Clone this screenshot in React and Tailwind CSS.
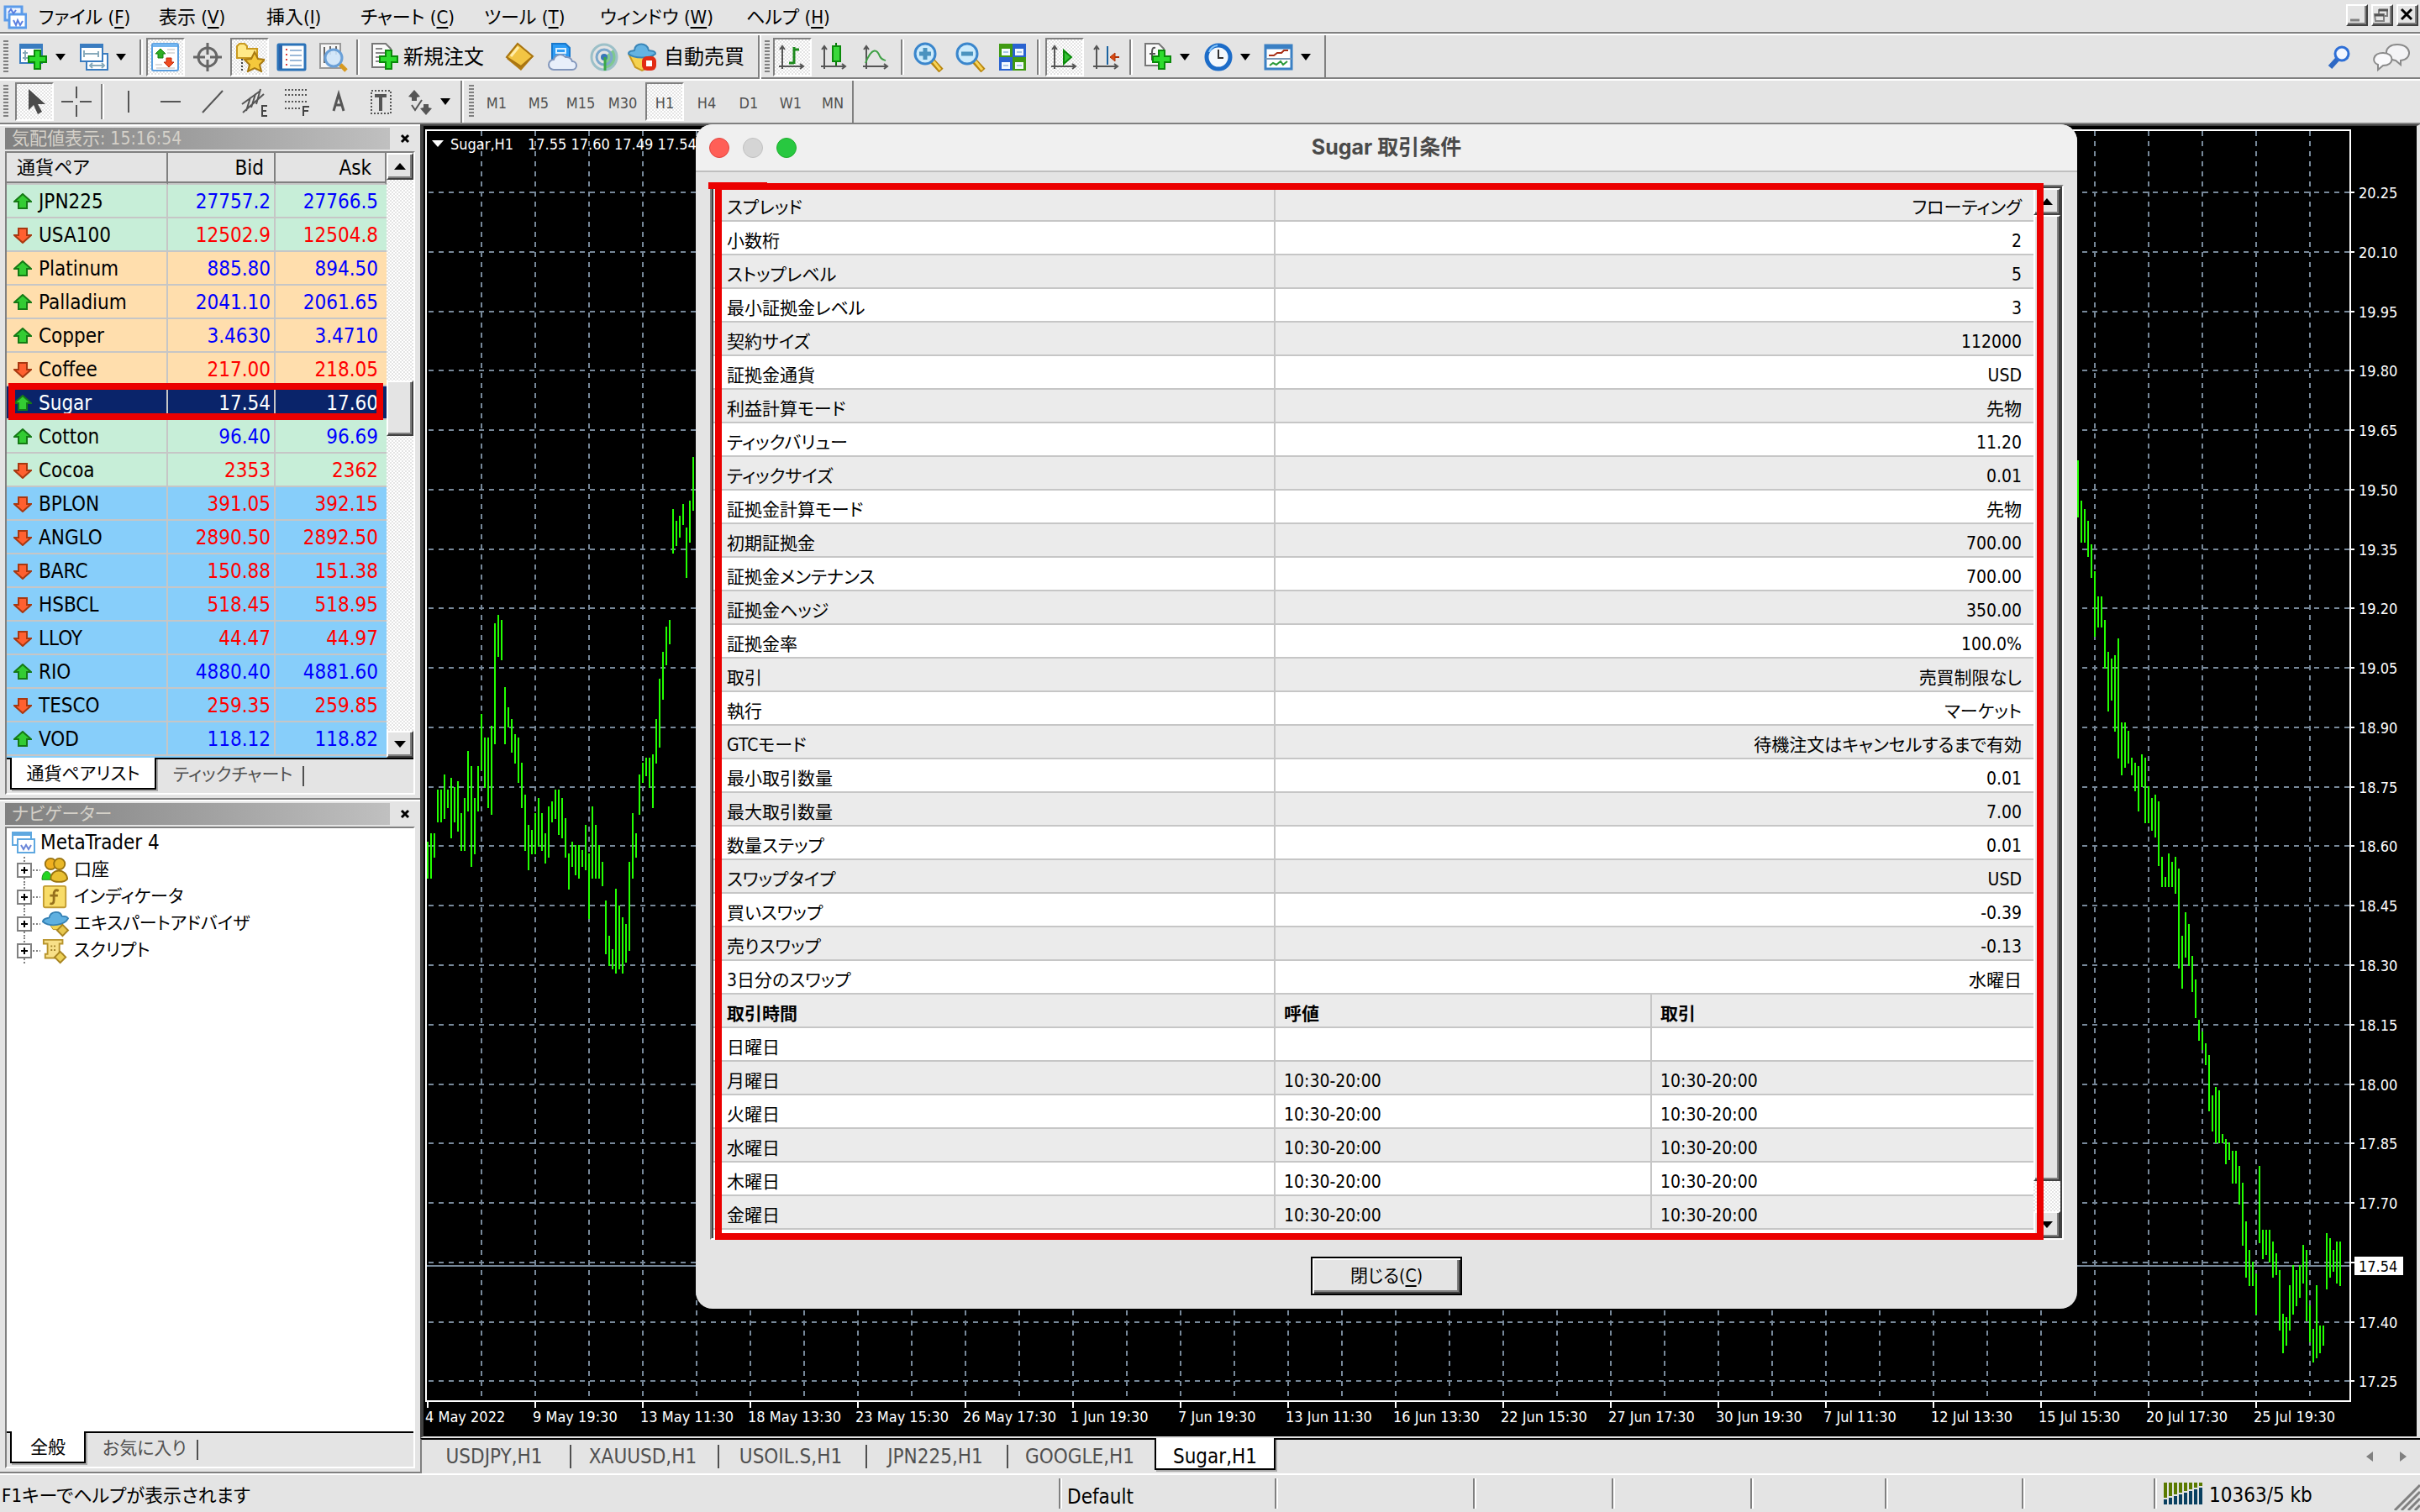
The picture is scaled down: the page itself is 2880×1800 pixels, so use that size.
import { useState } from "react";

const SYMBOLS = [
  ["JPN225", "27757.2", "27766.5", "up", "green"],
  ["USA100", "12502.9", "12504.8", "down", "green"],
  ["Platinum", "885.80", "894.50", "up", "sand"],
  ["Palladium", "2041.10", "2061.65", "up", "sand"],
  ["Copper", "3.4630", "3.4710", "up", "sand"],
  ["Coffee", "217.00", "218.05", "down", "sand"],
  ["Sugar", "17.54", "17.60", "up", "selected"],
  ["Cotton", "96.40", "96.69", "up", "green"],
  ["Cocoa", "2353", "2362", "down", "green"],
  ["BPLON", "391.05", "392.15", "down", "blue"],
  ["ANGLO", "2890.50", "2892.50", "down", "blue"],
  ["BARC", "150.88", "151.38", "down", "blue"],
  ["HSBCL", "518.45", "518.95", "down", "blue"],
  ["LLOY", "44.47", "44.97", "down", "blue"],
  ["RIO", "4880.40", "4881.60", "up", "blue"],
  ["TESCO", "259.35", "259.85", "down", "blue"],
  ["VOD", "118.12", "118.82", "up", "blue"],
];

const ROW_BG = {
  green: "bg-[#c7eed8]",
  sand: "bg-[#ffdead]",
  blue: "bg-[#87cefa]",
  selected: "bg-[#0a246a] text-white",
};

const SPEC = [
  ["スプレッド", "フローティング"],
  ["小数桁", "2"],
  ["ストップレベル", "5"],
  ["最小証拠金レベル", "3"],
  ["契約サイズ", "112000"],
  ["証拠金通貨", "USD"],
  ["利益計算モード", "先物"],
  ["ティックバリュー", "11.20"],
  ["ティックサイズ", "0.01"],
  ["証拠金計算モード", "先物"],
  ["初期証拠金", "700.00"],
  ["証拠金メンテナンス", "700.00"],
  ["証拠金ヘッジ", "350.00"],
  ["証拠金率", "100.0%"],
  ["取引", "売買制限なし"],
  ["執行", "マーケット"],
  ["GTCモード", "待機注文はキャンセルするまで有効"],
  ["最小取引数量", "0.01"],
  ["最大取引数量", "7.00"],
  ["数量ステップ", "0.01"],
  ["スワップタイプ", "USD"],
  ["買いスワップ", "-0.39"],
  ["売りスワップ", "-0.13"],
  ["3日分のスワップ", "水曜日"],
];

const SESSIONS = [
  ["日曜日", ""],
  ["月曜日", "10:30-20:00"],
  ["火曜日", "10:30-20:00"],
  ["水曜日", "10:30-20:00"],
  ["木曜日", "10:30-20:00"],
  ["金曜日", "10:30-20:00"],
];

const PRICES = [
  "20.25", "20.10", "19.95", "19.80", "19.65", "19.50", "19.35", "19.20", "19.05", "18.90", "18.75",
  "18.60", "18.45", "18.30", "18.15", "18.00", "17.85", "17.70", "", "17.40", "17.25",
];

const DATES = [
  "4 May 2022", "9 May 19:30", "13 May 11:30", "18 May 13:30", "23 May 15:30", "26 May 17:30",
  "1 Jun 19:30", "7 Jun 19:30", "13 Jun 11:30", "16 Jun 13:30", "22 Jun 15:30", "27 Jun 17:30",
  "30 Jun 19:30", "7 Jul 11:30", "12 Jul 13:30", "15 Jul 15:30", "20 Jul 17:30", "25 Jul 19:30",
];

// [high, low] pairs, one bar every 4px
const SPRING = [
  [1124, 1222], [1102, 1222], [1102, 1168], [986, 1074], [986, 1074], [945, 1065], [986, 1034], [954, 1115],
  [978, 1074], [963, 1097], [1048, 1150], [1008, 1150], [883, 1043], [923, 1191], [1008, 1159], [923, 1043],
  [784, 935], [847, 980], [847, 1034], [815, 1052], [542, 864], [520, 631], [533, 640], [712, 864],
  [766, 819], [797, 886], [838, 917], [847, 967], [914, 1034], [999, 1150], [1080, 1200], [1093, 1159],
  [1048, 1159], [1008, 1137], [1048, 1150], [1102, 1182], [1030, 1168], [1017, 1074], [986, 1065], [986, 1106],
  [1008, 1115], [1062, 1168], [1156, 1253], [1124, 1191], [1133, 1213], [1133, 1222], [1147, 1191], [1080, 1200],
  [1156, 1331], [1030, 1222], [1080, 1222], [1133, 1222], [1178, 1244], [1281, 1424], [1375, 1455], [1411, 1465],
  [1250, 1477], [1295, 1464], [1326, 1477], [1344, 1446], [1178, 1415], [1048, 1222], [1102, 1168], [945, 1052],
  [914, 967], [900, 949], [900, 980], [892, 1034], [797, 917], [690, 873], [618, 747], [551, 653],
  [533, 599], [237, 357], [269, 335], [255, 313], [224, 281], [287, 420], [215, 326], [99, 241],
];

const SUMMER = [
  [65, 157], [130, 197], [143, 197], [162, 221], [200, 254], [243, 349], [284, 334], [284, 334],
  [322, 400], [373, 469], [384, 451], [378, 502], [351, 545], [487, 572], [487, 560], [500, 553],
  [543, 572], [552, 597], [557, 630], [538, 591], [543, 649], [590, 649], [608, 661], [603, 672],
  [614, 718], [703, 751], [735, 752], [697, 751], [711, 751], [703, 762], [722, 883], [830, 915],
  [792, 865], [811, 878], [862, 921], [900, 962], [965, 999], [984, 1014], [1003, 1038], [1022, 1113],
  [1087, 1145], [1073, 1164], [1079, 1164], [1149, 1164], [1157, 1197], [1163, 1191], [1176, 1229], [1176, 1229],
  [1200, 1262], [1228, 1329], [1290, 1380], [1336, 1394], [1354, 1394], [1373, 1440], [1200, 1324], [1303, 1351],
  [1303, 1343], [1303, 1356], [1322, 1380], [1341, 1376], [1368, 1465], [1438, 1502], [1444, 1490], [1392, 1465],
  [1360, 1440], [1368, 1426], [1360, 1413], [1327, 1389], [1336, 1451], [1425, 1484], [1463, 1517], [1392, 1510],
  [1457, 1502], [1457, 1490], [1308, 1399], [1317, 1380], [1336, 1370], [1322, 1389], [1322, 1394],
];

const RAISED =
  "border-2 border-t-white border-l-white border-r-[#404040] border-b-[#404040] bg-[#e4e4e4] shadow-[inset_-2px_-2px_0_#808080]";
const HATCH = "bg-[repeating-conic-gradient(#fff_0_25%,#e4e4e4_0_50%)] bg-[length:4px_4px]";

export default function App() {
  const [open, setOpen] = useState(true);

  return (
    <div className="relative flex h-screen flex-col overflow-hidden bg-[#e4e4e4] font-['DejaVu_Sans_Condensed','DejaVu_Sans','Noto_Sans_CJK_JP',sans-serif] text-[22px] whitespace-nowrap text-black [font-feature-settings:'palt']">
      <MenuBar />
      <MainToolbar />
      <LineToolbar />
      <div className="flex min-h-0 flex-1">
        <aside className="flex w-[500px] shrink-0 flex-col border-t-2 border-b-2 border-t-white border-b-[#808080]">
          <MarketWatch />
          <Navigator />
        </aside>
        <main className="flex min-w-0 flex-1 flex-col">
          <div className="min-h-0 flex-1 border-t-2 border-r-4 border-b-2 border-l-4 border-t-[#404040] border-r-[#e4e4e4] border-b-[#e4e4e4] border-l-[#404040] bg-black">
            <Chart />
          </div>
          <ChartTabs />
        </main>
      </div>
      <StatusBar />
      {open && <SpecDialog onClose={() => setOpen(false)} />}
    </div>
  );
}

function MenuBar() {
  const items = [
    ["ファイル ", "F", "w-[143px]"],
    ["表示 ", "V", "w-[128px]"],
    ["挿入", "I", "w-[112px]"],
    ["チャート ", "C", "w-[147px]"],
    ["ツール ", "T", "w-[138px]"],
    ["ウィンドウ ", "W", "w-[174px]"],
    ["ヘルプ ", "H", "w-[140px]"],
  ];
  return (
    <header className="flex h-[42px] shrink-0 items-center border-b-2 border-white pl-1 shadow-[inset_0_-2px_0_#808080]">
      <svg className="mr-3.5 h-8 w-7" viewBox="0 0 28 32">
        <rect x="2" y="4" width="20" height="16" fill="#eef5ff" stroke="#5b9bea" strokeWidth="3" />
        <rect x="7" y="13" width="20" height="16" fill="#fff" stroke="#5b9bea" strokeWidth="3" />
        <path d="M6 11l3-4 3 5 3-4M12 20l3 6 2-6 3 6 3-5" fill="none" stroke="#5b7fe0" strokeWidth="2" />
      </svg>
      {items.map(([label, key, w]) => (
        <button key={key} className={`${w} pt-0.5 text-left leading-9`}>
          {label}(<u className="underline-offset-4">{key}</u>)
        </button>
      ))}
      <div className="mr-0.5 mb-1 ml-auto flex gap-1">
        <button aria-label="最小化" className={`${RAISED} size-[26px]`}>
          <svg viewBox="0 0 22 22"><path d="M3 17h11" stroke="#808080" strokeWidth="3" /></svg>
        </button>
        <button aria-label="元に戻す" className={`${RAISED} size-[26px]`}>
          <svg viewBox="0 0 22 22">
            <path d="M7 9V5h10v7h-3M2 10h11v8H3z" fill="none" stroke="#808080" strokeWidth="2" />
            <path d="M7 5h11M2 11h11" stroke="#555" strokeWidth="3" />
          </svg>
        </button>
        <button aria-label="閉じる" className={`${RAISED} size-[26px]`}>
          <svg viewBox="0 0 22 22"><path d="M4 4l12 12M16 4L4 16" stroke="#000" strokeWidth="3" /></svg>
        </button>
      </div>
    </header>
  );
}

function Tool({ label, pressed, children }) {
  return (
    <button
      aria-label={label}
      aria-pressed={pressed}
      className={`flex h-[46px] w-[46px] shrink-0 items-center justify-center border-2 ${
        pressed ? `border-t-[#808080] border-r-white border-b-white border-l-[#808080] ${HATCH}` : "border-transparent"
      }`}
    >
      <svg className="size-9 shrink-0" viewBox="0 0 36 36" fill="none">{children}</svg>
    </button>
  );
}

function DropTool({ label, children }) {
  return (
    <button aria-label={label} className="flex h-[46px] w-[68px] shrink-0 items-center gap-2">
      <svg className="size-9" viewBox="0 0 36 36" fill="none">{children}</svg>
      <svg className="h-2 w-3" viewBox="0 0 12 8"><path d="M0 0h12L6 8z" /></svg>
    </button>
  );
}

function Grip() {
  return <span className="h-10 w-1.5 shrink-0 bg-[repeating-linear-gradient(#808080_0_2px,transparent_2px_4px)]" />;
}

function Sep({ wide }) {
  return (
    <span
      className={`h-[42px] w-1 shrink-0 border-r-2 border-l-2 border-r-white border-l-[#808080] ${wide ? "mx-0.5" : ""}`}
    />
  );
}

function Plus() {
  return <path d="M19 10h7v7h7v7h-7v8h-7v-8h-7v-7h7z" fill="#2ddb2d" stroke="#0a8a0a" strokeWidth="2" />;
}

function Axes() {
  return <path d="M6 32V6m-3 3l3-4 3 4M2 29h29m-4-3l4 3-4 3" stroke="#555" strokeWidth="2" />;
}

function MainToolbar() {
  return (
    <div className="flex h-[54px] shrink-0 items-center border-b-2 border-white shadow-[inset_0_-2px_0_#808080]">
      <div className="flex h-full items-center gap-1 border-r-2 border-[#808080] pr-3 pl-1">
        <Grip />
        <span className="w-1" />
        <DropTool label="新規チャート">
          <rect x="2" y="3" width="26" height="22" fill="#fff" stroke="#3a7cc0" strokeWidth="2" />
          <path d="M2 6h26" stroke="#3a7cc0" strokeWidth="4" />
          <path d="M8 10v12M5 19h9M5 13h6" stroke="#8ab" strokeWidth="2" />
          <Plus />
        </DropTool>
        <DropTool label="チャートの組表示">
          <rect x="9" y="14" width="25" height="19" fill="#fff" stroke="#3a7cc0" strokeWidth="2" />
          <path d="M13 28h17m-14-3l-3 3 3 3m11-6l3 3-3 3" stroke="#8ab" strokeWidth="2" />
          <rect x="2" y="3" width="26" height="20" fill="#fff" stroke="#3a7cc0" strokeWidth="2" />
          <path d="M2 5h26" stroke="#3a7cc0" strokeWidth="4" />
          <path d="M6 10v8m0-4h17m0-3v7" stroke="#8ab" strokeWidth="2" />
        </DropTool>
        <Sep />
        <Tool label="気配値表示" pressed>
          <rect x="2" y="2" width="31" height="32" rx="2" fill="#fff" stroke="#5b9fe0" strokeWidth="2" />
          <path d="M3 4h29" stroke="#74b6f0" strokeWidth="4" />
          <path d="M7 31h22M20 9h9M20 13h9M6 27h8" stroke="#ddd" strokeWidth="2" />
          <path d="M12 8l6 6h-3v5H9v-5H6z" fill="#2fae25" stroke="#14800f" />
          <path d="M22 30l6-6h-3v-5h-6v5h-3z" fill="#f04b20" stroke="#c02a0a" />
        </Tool>
        <Tool label="データウィンドウ">
          <circle cx="18" cy="18" r="11" stroke="#666" strokeWidth="3" />
          <path d="M18 1v14m0 6v14M1 18h14m6 0h14" stroke="#666" strokeWidth="3" />
        </Tool>
        <Tool label="ナビゲーター" pressed>
          <path d="M3 9V5l3-3h6l3 3v3h12v11H3z" fill="#ffe988" stroke="#c99a20" strokeWidth="2" />
          <path d="M9 20v14" stroke="#444" strokeWidth="2" strokeDasharray="2 2" />
          <path d="M24 12l4 8 8 1-6 6 2 8-8-4-8 4 2-8-6-6 8-1z" fill="#f5c93c" stroke="#a87910" strokeWidth="2" />
        </Tool>
        <Tool label="ターミナル">
          <rect x="2" y="3" width="32" height="30" rx="1" fill="#fff" stroke="#2a72b8" strokeWidth="3" />
          <path d="M5 4v28" stroke="#2a62a8" strokeWidth="4" />
          <path d="M16 10h14M16 16h14M16 22h14M16 28h14" stroke="#9ab8d8" strokeWidth="2" />
          <path d="M12 8v22" stroke="#e04040" strokeWidth="2" strokeDasharray="2 4" />
        </Tool>
        <Tool label="ストラテジーテスター">
          <rect x="2" y="2" width="24" height="29" fill="#f6f6f6" stroke="#999" strokeWidth="2" />
          <path d="M7 6v19M14 5v10M21 5v10" stroke="#666" strokeWidth="2" />
          <circle cx="18" cy="19" r="10" fill="#cfe6fa" fillOpacity=".9" stroke="#6aa0d8" strokeWidth="3" />
          <path d="M26 27l7 7" stroke="#d89a20" strokeWidth="5" />
        </Tool>
        <Sep />
        <button className="ml-2 flex h-[46px] w-[152px] shrink-0 items-center gap-1 text-[24px]">
          <svg className="size-9 shrink-0" viewBox="0 0 36 36" fill="none">
            <path d="M3 2h16l6 6v22H3z" fill="#fafafa" stroke="#777" strokeWidth="2" />
            <path d="M7 8h8M7 13h13M7 18h10M7 23h8" stroke="#888" strokeWidth="2" />
            <Plus />
          </svg>
          新規注文
        </button>
        <Tool label="メタエディター">
          <path d="M2 20L15 3l18 15-14 16z" fill="#b07a12" />
          <path d="M2 18L15 2l18 15-14 12z" fill="#f2c544" stroke="#a87410" strokeWidth="2" />
          <path d="M7 17l9-11" stroke="#ffedaa" strokeWidth="3" />
        </Tool>
        <Tool label="仮想サーバー">
          <path d="M6 2h16l5 5v15H6z" fill="#2d9cf5" stroke="#1878cc" strokeWidth="2" />
          <path d="M11 8h11v5H11zM11 16h11" stroke="#d8efff" strokeWidth="2" />
          <path d="M8 33a6 6 0 010-12 8 8 0 0114-3 7 7 0 018 5 5 5 0 010 10z" fill="#e8effa" stroke="#8296bb" strokeWidth="2" />
        </Tool>
        <Tool label="シグナル">
          <path d="M18 18v16a16 16 0 0012-26z" fill="#80c890" />
          <circle cx="18" cy="18" r="15" stroke="#9cc0c8" strokeWidth="3" />
          <circle cx="18" cy="18" r="9" stroke="#7ba8cc" strokeWidth="3" />
          <circle cx="18" cy="18" r="4" fill="#3977b8" />
          <path d="M19 18v16" stroke="#3aa848" strokeWidth="3" />
        </Tool>
        <button className="flex h-[46px] w-[144px] shrink-0 items-center gap-2 text-[24px]">
          <svg className="size-9 shrink-0" viewBox="0 0 36 36" fill="none">
            <path d="M3 16h28l-4 14-9 4-8-4z" fill="#f5d250" stroke="#c89820" strokeWidth="2" />
            <path d="M2 14c0-4 5-3 7-4 0-10 16-10 17 0 3 1 8 0 8 4-6 6-26 6-32 0z" fill="#64b3e2" stroke="#3a86b8" strokeWidth="2" />
            <rect x="18" y="17" width="17" height="17" rx="6" fill="#e22c14" />
            <rect x="23" y="22" width="7" height="7" fill="#fff" />
          </svg>
          自動売買
        </button>
      </div>
      <div className="flex h-full items-center gap-1 border-r-2 border-l-2 border-r-[#808080] border-l-white pr-1 pl-1">
        <Grip />
        <Tool label="バーチャート" pressed>
          <Axes />
          <path d="M20 6v20M14 25h6M20 9h6" stroke="#1d8a1d" strokeWidth="3" />
        </Tool>
        <Tool label="ローソク足">
          <Axes />
          <path d="M20 1v27" stroke="#0a7a0a" strokeWidth="2" />
          <rect x="16" y="5" width="9" height="18" fill="#3ad83a" stroke="#0a8a0a" strokeWidth="2" />
        </Tool>
        <Tool label="ラインチャート">
          <Axes />
          <path d="M5 25c8-20 14-16 17-8 2 4 4 4 7 5" stroke="#3fa045" strokeWidth="2" />
        </Tool>
        <Sep wide />
        <Tool label="ズームイン">
          <path d="M22 22l11 12" stroke="#b8850c" strokeWidth="7" />
          <path d="M23 22l9 11" stroke="#f8d458" strokeWidth="3" />
          <circle cx="14" cy="14" r="12" fill="#ccebfc" stroke="#3a86cc" strokeWidth="3" />
          <path d="M14 7v14M7 14h14" stroke="#4b93bf" strokeWidth="5" />
        </Tool>
        <Tool label="ズームアウト">
          <path d="M22 22l11 12" stroke="#b8850c" strokeWidth="7" />
          <path d="M23 22l9 11" stroke="#f8d458" strokeWidth="3" />
          <circle cx="14" cy="14" r="12" fill="#ccebfc" stroke="#3a86cc" strokeWidth="3" />
          <path d="M7 14h14" stroke="#4b93bf" strokeWidth="5" />
        </Tool>
        <Tool label="ウィンドウの整列">
          <path d="M2 2h16v16H2zM18 18h16v16H18z" fill="#3f9a12" />
          <path d="M18 2h16v16H18zM2 18h16v16H2z" fill="#2a63d0" />
          <path d="M5 8h10v8H5zM21 8h10v8H21zM5 24h10v8H5zM21 24h10v8H21z" fill="#f4faff" />
          <path d="M7 12h6M23 12h6M7 28h6M23 28h6" stroke="#a8c4e8" strokeWidth="2" />
        </Tool>
        <Sep wide />
        <Tool label="自動スクロール" pressed>
          <Axes />
          <path d="M17 10v16l9-8z" fill="#35c235" stroke="#0a8a0a" strokeWidth="2" />
        </Tool>
        <Tool label="チャートシフト">
          <Axes />
          <path d="M19 5v22" stroke="#1a62a0" strokeWidth="2" />
          <path d="M22 18h11" stroke="#b03208" strokeWidth="2" />
          <path d="M28 13l-6 5 6 5z" fill="#d84a10" stroke="#b03208" />
        </Tool>
        <Sep />
        <span className="w-1" />
        <DropTool label="インディケータ">
          <path d="M3 2h16l6 6v20H3z" fill="#fafafa" stroke="#777" strokeWidth="2" />
          <path d="M15 7c-4-1-4 3-4 6v9M8 14h7" stroke="#555" strokeWidth="2" />
          <Plus />
        </DropTool>
        <DropTool label="時間足">
          <circle cx="18" cy="18" r="14" fill="#f4f8fc" stroke="#1c6cc8" strokeWidth="5" />
          <path d="M18 9v10h6" stroke="#333" strokeWidth="2" />
          <path d="M7 12a12 12 0 0110-8" stroke="#86c6f8" strokeWidth="2" />
        </DropTool>
        <DropTool label="定型チャート">
          <rect x="2" y="4" width="31" height="28" fill="#fff" stroke="#3a80c4" strokeWidth="3" />
          <path d="M2 6h31" stroke="#3a80c4" strokeWidth="5" />
          <path d="M2 20h31" stroke="#7a9ab8" strokeWidth="2" />
          <path d="M6 16h6l4-3h5l3-3h5" stroke="#a83018" strokeWidth="2" />
          <path d="M7 28l4-3 4 2 5-4 3 4 5-4" stroke="#2a9a38" strokeWidth="2" />
        </DropTool>
      </div>
      <div className="mr-3 ml-auto flex items-center gap-6">
        <button aria-label="検索">
          <svg className="size-8" viewBox="0 0 32 32" fill="none">
            <path d="M15 17L5 28" stroke="#2e68c4" strokeWidth="6" />
            <circle cx="19" cy="12" r="8" fill="#f2f6ff" stroke="#2e6fd6" strokeWidth="3" />
          </svg>
        </button>
        <button aria-label="チャット">
          <svg className="h-9 w-11" viewBox="0 0 44 36" fill="none" stroke="#8a8a8a" strokeWidth="2">
            <path d="M29 3c18 0 18 18 4 19v5l-6-5C12 20 12 3 29 3z" fill="#f4f4f6" />
            <path d="M12 13c14 0 14 15 0 15l-6 5v-6C-2 24 0 13 12 13z" fill="#fafafc" />
          </svg>
        </button>
      </div>
    </div>
  );
}

function LineToolbar() {
  const [frame, setFrame] = useState("H1");
  return (
    <div className="flex h-[52px] shrink-0 items-center border-b-2 border-[#808080]">
      <div className="flex h-full items-center gap-1 border-r-2 border-[#808080] pl-1">
        <Grip />
        <span />
        <Tool label="カーソル" pressed>
          <path d="M11 3v25l6-6 5 11 5-3-5-9h9z" fill="#4a4a4a" />
        </Tool>
        <Tool label="十字カーソル">
          <path d="M18 0v14m0 8v14M0 18h14m8 0h14" stroke="#555" strokeWidth="2" />
        </Tool>
        <Sep wide />
        <Tool label="垂直線"><path d="M18 5v26" stroke="#555" strokeWidth="2" /></Tool>
        <Tool label="水平線"><path d="M6 18h24" stroke="#555" strokeWidth="2" /></Tool>
        <Tool label="トレンドライン"><path d="M6 31L30 5" stroke="#555" strokeWidth="2" /></Tool>
        <Tool label="チャネル">
          <path d="M3 21L25 5M4 31L29 9M8 29l5-16M14 25l5-16M20 21l5-18" stroke="#555" strokeWidth="2" />
          <path d="M33 23h-6v12h6m-6-6h5" stroke="#444" strokeWidth="2" />
        </Tool>
        <Tool label="フィボナッチ">
          <path d="M4 4h28M4 10h28M4 18h28M4 26h18" stroke="#555" strokeWidth="2" strokeDasharray="2 2" />
          <path d="M33 24h-7v11m0-6h6" stroke="#444" strokeWidth="2" />
        </Tool>
        <Tool label="テキスト">
          <path d="M12 29l6-20 6 20m-10-7h8" stroke="#555" strokeWidth="3" />
        </Tool>
        <Tool label="テキストラベル">
          <rect x="7" y="5" width="23" height="27" stroke="#555" strokeWidth="2" strokeDasharray="2 2" />
          <path d="M11 11h14M18 11v18" stroke="#555" strokeWidth="4" />
        </Tool>
        <DropTool label="矢印">
          <path d="M13 4l7 8-4 1v4h-6v-4l-4-1zM27 34l-7-8 4-1v-4h6v4l4 1z" fill="#555" />
          <path d="M10 22l4 6 8-12" stroke="#555" strokeWidth="2" />
        </DropTool>
      </div>
      <div className="flex h-full items-center gap-1 border-r-2 border-l-2 border-r-[#808080] border-l-white pl-1.5">
        <Grip />
        {["M1", "M5", "M15", "M30", "H1", "H4", "D1", "W1", "MN"].map((f) => (
          <button
            key={f}
            onClick={() => setFrame(f)}
            className={`h-[46px] w-[46px] border-2 pt-0.5 text-[18px] text-[#505050] ${
              f === frame ? `border-t-[#808080] border-r-white border-b-white border-l-[#808080] ${HATCH}` : "border-transparent"
            }`}
          >
            {f}
          </button>
        ))}
      </div>
    </div>
  );
}

function PanelTitle({ children }) {
  return (
    <div className="mb-0.5 flex h-[26px] shrink-0 items-center">
      <h2 className="h-full w-[458px] bg-linear-to-r from-[#808080] to-[#c0c0c0] pl-2 text-[21px] leading-[26px] text-[#d4d0c8]">
        {children}
      </h2>
      <button aria-label="閉じる" className="ml-3">
        <svg className="h-3 w-3" viewBox="0 0 12 12"><path d="M2 2l8 8M10 2l-8 8" stroke="#000" strokeWidth="3" /></svg>
      </button>
    </div>
  );
}

function Arrow({ dir }) {
  return dir === "up" ? (
    <svg className="h-5 w-[22px]" viewBox="0 0 22 20"><path d="M11 1l10 9h-5v8H6v-8H1z" fill="#33cc33" stroke="#157a15" strokeWidth="2" /></svg>
  ) : (
    <svg className="h-5 w-[22px]" viewBox="0 0 22 20"><path d="M11 19L1 10h5V2h10v8h5z" fill="#ff6030" stroke="#a83810" strokeWidth="2" /></svg>
  );
}

function ScrollButton({ up }) {
  return (
    <button aria-label={up ? "上へ" : "下へ"} className={`${RAISED} flex h-8 w-8 shrink-0 items-center justify-center`}>
      <svg className="h-2 w-3.5" viewBox="0 0 14 8"><path d={up ? "M0 8h14L7 0z" : "M0 0h14L7 8z"} /></svg>
    </button>
  );
}

function BottomTabs({ active, activeClass, other }) {
  return (
    <div className="flex h-[42px] shrink-0 border-t-2 border-black text-[21px]">
      <button className={`${activeClass} -mt-0.5 h-[38px] border-2 border-t-0 border-black bg-white pt-1 shadow-[2px_2px_0_#aaa]`}>
        {active}
      </button>
      <button className="ml-5 h-9 pt-0.5 pr-3 text-[#505050]">{other}</button>
      <span className="mt-2 h-6 w-0.5 bg-[#505050]" />
    </div>
  );
}

function MarketWatch() {
  return (
    <section className="flex flex-col border-b-2 border-[#808080] pt-0.5 pr-1.5 pb-1 pl-1.5">
      <PanelTitle>気配値表示: 15:16:54</PanelTitle>
      <div className="border-2 border-t-[#808080] border-r-white border-b-white border-l-[#808080]">
        <div className="flex bg-[#87cefa]">
          <div className="min-w-0 flex-1 pb-0.5">
            <table className="w-full table-fixed border-separate border-spacing-0 text-[24px]">
              <colgroup>
                <col className="w-[192px]" />
                <col className="w-[128px]" />
                <col />
              </colgroup>
              <thead>
                <tr className="h-[38px] bg-[#e4e4e4] leading-8 [&>th]:border-r-2 [&>th]:border-b-2 [&>th]:border-r-[#808080] [&>th]:border-b-[#c6c6c6] [&>th]:font-normal [&>th]:shadow-[inset_0_-2px_0_#808080]">
                  <th className="pl-3 text-left text-[22px]">通貨ペア</th>
                  <th className="pr-3 text-right">Bid</th>
                  <th className="pr-4 text-right">Ask</th>
                </tr>
              </thead>
              <tbody>
                {SYMBOLS.map(([name, bid, ask, dir, tone]) => {
                  const color = tone === "selected" ? "text-white" : dir === "up" ? "text-[#0000ff]" : "text-[#ff0000]";
                  return (
                    <tr
                      key={name}
                      className={`relative h-10 leading-9 ${ROW_BG[tone]} [&>td]:border-b-2 [&>td]:border-[#c6c6c6] [&>td]:pt-0.5`}
                    >
                      <td className="border-r-2 pl-2">
                        <span className="flex items-center gap-2"><Arrow dir={dir} />{name}</span>
                        {tone === "selected" && (
                          <span className="absolute -top-1 right-1 bottom-0 left-0.5 border-8 border-[#eb0000]" />
                        )}
                      </td>
                      <td className={`border-r-2 pr-1 text-right ${color}`}>{bid}</td>
                      <td className={`pr-2.5 text-right ${color}`}>{ask}</td>
                    </tr>
                  );
                })}
              </tbody>
            </table>
          </div>
          <div className={`flex w-8 flex-col ${HATCH}`}>
            <ScrollButton up />
            <span className="grow-[240]" />
            <span className={`${RAISED} h-[66px]`} />
            <span className="grow-[352]" />
            <ScrollButton />
          </div>
        </div>
        <BottomTabs active="通貨ペアリスト" activeClass="ml-1 w-[174px]" other="ティックチャート" />
      </div>
    </section>
  );
}

function Navigator() {
  const nodes = [
    ["口座", <><circle cx="12" cy="9" r="7" fill="#f0b020" stroke="#9a7410" strokeWidth="2" /><circle cx="23" cy="9" r="7" fill="#e8b828" stroke="#9a7410" strokeWidth="2" /><path d="M1 29c0-14 12-14 12 0z" fill="#22d522" stroke="#128a12" /><path d="M12 28c0-14 20-14 21 0-4 5-17 5-21 0z" fill="#eac030" stroke="#9a7410" strokeWidth="2" /></>],
    ["インディケータ", <><rect x="3" y="3" width="28" height="27" rx="2" fill="#f8dc68" stroke="#c09a30" strokeWidth="2" /><path d="M22 9c-4-2-6 0-6 5v7c0 4-2 5-5 4M11 15h10" stroke="#96701c" strokeWidth="3" /></>],
    ["エキスパートアドバイザ", <><path d="M9 15h18l-4 9h-8z" fill="#f4d450" stroke="#b89020" /><path d="M2 14c1-5 6-4 8-5 2-9 14-9 16-2 3 0 7 0 8 3-4 8-22 12-32 4z" fill="#5fb0e0" stroke="#3480b4" strokeWidth="2" /><path d="M27 18l7 7-7 7-7-7z" fill="#e8c850" stroke="#a88420" strokeWidth="2" /></>],
    ["スクリプト", <><path d="M3 3h24v5h-4v13h4v5H5v-5h3V8H3z" fill="#f8e088" stroke="#b8942c" strokeWidth="2" /><path d="M12 11h7M12 16h7" stroke="#a08028" strokeWidth="2" strokeDasharray="2 2" /><path d="M24 18l7 7-7 7-7-7z" fill="#ecd058" stroke="#a88420" strokeWidth="2" /></>],
  ];
  return (
    <section className="flex min-h-0 flex-1 flex-col border-t-2 border-white px-1.5 pt-0.5 pb-1">
      <PanelTitle>ナビゲーター</PanelTitle>
      <div className="flex min-h-0 flex-1 flex-col border-2 border-t-[#808080] border-r-white border-b-white border-l-[#808080]">
        <div className="flex-1 bg-white pl-1.5">
          <div className="flex h-[34px] items-center gap-1.5 text-[24px]">
            <svg className="h-7 w-7" viewBox="0 0 28 28" fill="none">
              <rect x="1" y="2" width="22" height="15" fill="#fff" stroke="#5fa8e0" strokeWidth="2" />
              <path d="M1 4h22" stroke="#5fa8e0" strokeWidth="4" />
              <rect x="7" y="10" width="20" height="16" fill="#fff" stroke="#5fa8e0" strokeWidth="2" />
              <path d="M11 17l3 5 3-5 3 5 3-5" stroke="#6a86d8" strokeWidth="2" />
            </svg>
            MetaTrader 4
          </div>
          <ul className="text-[21px]">
            {nodes.map(([label, icon]) => (
              <li key={label} className="flex h-8 items-center">
                <svg className="h-8 w-[34px]" viewBox="0 0 34 32" fill="none">
                  <path d="M15 0v7M15 25v7M25 16h9" stroke="#808080" strokeWidth="2" strokeDasharray="2 2" />
                  <rect x="7" y="8" width="16" height="16" fill="#fff" stroke="#808080" strokeWidth="2" />
                  <path d="M11 16h8M15 12v8" stroke="#000" strokeWidth="2" />
                </svg>
                <svg className="mr-1 h-8 w-9" viewBox="0 0 36 34" fill="none">{icon}</svg>
                {label}
              </li>
            ))}
          </ul>
        </div>
        <BottomTabs active="全般" activeClass="ml-1 w-[90px]" other="お気に入り" />
      </div>
    </section>
  );
}

function Bars({ data, x, scale }) {
  return data.map(([hi, lo], i) => (
    <rect key={i} x={x + i * 4} y={500 + hi / scale} width="2" height={(lo - hi) / scale} />
  ));
}

function Chart() {
  const rows = PRICES.map((p, i) => [p, Math.round(229 + i * 70.77)]);
  const cols = Array.from({ length: 35 }, (_, i) => 573 + i * 64);
  return (
    <svg className="block h-full w-full text-[18px]" viewBox="504 150 2372 1560" preserveAspectRatio="xMinYMin meet">
      <g stroke="#778899" strokeWidth="2" strokeDasharray="6 6">
        {rows.map(([, y]) => <path key={y} d={`M510 ${y}H2796`} />)}
        {cols.map((x) => <path key={x} d={`M${x} 156V1668`} />)}
      </g>
      <path d="M508 1507H2796" stroke="#778899" strokeWidth="2" />
      <g fill="#22ff00" shapeRendering="crispEdges">
        <Bars data={SPRING} x={508} scale={2.24} />
        <Bars data={SUMMER} x={2472} scale={1.3517} />
      </g>
      <path d="M507 1668V155H2797V1668H506" fill="none" stroke="#fff" strokeWidth="2" />
      <g fill="#fff">
        {rows.map(([p, y]) => (
          <g key={y}>
            <rect x="2798" y={y - 1} width="4" height="2" />
            <text x="2807" y={y + 7}>{p}</text>
          </g>
        ))}
        {DATES.map((d, i) => (
          <g key={d}>
            <rect x={508 + i * 128} y="1669" width="2" height="7" />
            <text x={506 + i * 128} y="1693">{d}</text>
          </g>
        ))}
        <path d="M514 167h14l-7 8z" />
        <text x="536" y="178">Sugar,H1</text>
        <text x="628" y="178">17.55 17.60 17.49 17.54</text>
        <rect x="2802" y="1496" width="58" height="22" />
      </g>
      <text x="2807" y="1514">17.54</text>
    </svg>
  );
}

function ChartTabs() {
  const tabs = [
    ["USDJPY,H1", "w-[178px]"],
    ["XAUUSD,H1", "w-[176px]"],
    ["USOIL.S,H1", "w-[176px]"],
    ["JPN225,H1", "w-[168px]"],
    ["GOOGLE,H1", "w-[174px]"],
  ];
  return (
    <nav className="flex h-[42px] shrink-0 border-t-2 border-l-2 border-t-black border-l-[#808080] text-[24px]">
      {tabs.map(([name, w], i) => (
        <span key={name} className={`${w} flex items-center justify-center`}>
          <button className="flex-1 pr-1 text-[#505050]">{name}</button>
          {i < 4 && <span className="h-7 w-0.5 bg-[#505050]" />}
        </span>
      ))}
      <button className="-mt-0.5 h-[38px] w-[144px] border-2 border-t-0 border-black bg-white pt-1 shadow-[2px_2px_0_#aaa]">Sugar,H1</button>
      <div className="mr-4 ml-auto flex items-center gap-8">
        <button aria-label="前へ"><svg className="h-3 w-2" viewBox="0 0 8 12"><path d="M8 0v12L0 6z" fill="#808080" /></svg></button>
        <button aria-label="次へ"><svg className="h-3 w-2" viewBox="0 0 8 12"><path d="M0 0v12l8-6z" fill="#808080" /></svg></button>
      </div>
    </nav>
  );
}

function StatusBar() {
  const cell = "h-9 shrink-0 border-l-2 border-[#808080] shadow-[inset_2px_0_0_#fff]";
  return (
    <footer className="flex h-[46px] shrink-0 items-center border-t-2 border-white">
      <p className="min-w-0 flex-1 pt-1 pl-0.5">F1キーでヘルプが表示されます</p>
      <span className={`${cell} w-[257px] pt-1.5 pl-2 text-[24px] leading-8`}>Default</span>
      <span className={`${cell} w-[236px]`} />
      <span className={`${cell} w-[165px]`} />
      <span className={`${cell} w-[165px]`} />
      <span className={`${cell} w-[160px]`} />
      <span className={`${cell} w-[163px]`} />
      <span className={`${cell} w-[157px]`} />
      <div className={`${cell} flex w-[317px] items-center gap-2 pl-2.5 text-[24px]`}>
        <svg className="h-[26px] w-[46px]" viewBox="0 0 46 26">
          {[0, 1, 2, 3, 4, 5, 6, 7].map((i) => (
            <g key={i}>
              <rect x={i * 6} y="0" width="4" height={18 - i * 2} fill="#5a7a00" />
              <rect x={i * 6} y={20 - i * 2} width="4" height={6 + i * 2} fill="#0a4060" />
            </g>
          ))}
        </svg>
        <span className="pt-1">10363/5 kb</span>
        <svg className="mt-2 ml-auto h-8 w-8" viewBox="0 0 32 32">
          <path d="M2 32L32 2M10 32L32 10M18 32L32 18M26 32l6-6" stroke="#808080" strokeWidth="3" />
        </svg>
      </div>
    </footer>
  );
}

function SpecDialog({ onClose }) {
  const stripe = (i) => (i % 2 ? "bg-white" : "bg-[#ebebeb]");
  const row = "h-10 leading-[30px] [&>*]:border-b-2 [&>*]:border-[#c6c6c6] [&>*]:pt-2";
  return (
    <div role="dialog" aria-label="Sugar 取引条件" className="absolute top-[148px] right-[408px] left-[828px] overflow-hidden rounded-[20px] bg-[#e4e4e4]">
      <div className="flex h-[57px] items-center border-b-2 border-[#bfbfbf] bg-[#f0f0f0] px-4">
        <div className="flex flex-1 gap-4">
          <button aria-label="閉じる" onClick={onClose} className="size-6 rounded-full border border-[#e0443e] bg-[#ff5f57]" />
          <button aria-label="しまう" className="size-6 rounded-full border border-[#c0c0c0] bg-[#d5d5d5]" />
          <button aria-label="拡大" className="size-6 rounded-full border border-[#1dad2b] bg-[#28c840]" />
        </div>
        <h1 className="font-['Inter','Noto_Sans_CJK_JP',sans-serif] text-[25px] font-bold text-[#4a4a4a]">Sugar 取引条件</h1>
        <div className="flex-1" />
      </div>
      <div className="relative mt-[15px] mr-4 ml-[17px]">
        <div className="flex h-[1256px] overflow-hidden border-2 border-t-[#808080] border-r-white border-b-white border-l-[#808080]">
          <div className="min-w-0 flex-1 border-t-2 border-l-2 border-[#404040] bg-white">
            <table className="w-full table-fixed border-separate border-spacing-0 text-[21px]">
              <colgroup>
                <col className="w-[669px]" />
                <col className="w-[448px]" />
                <col />
              </colgroup>
              <tbody>
                {SPEC.map(([label, value], i) => (
                  <tr key={label} className={`${row} ${stripe(i)}`}>
                    <th scope="row" className="border-r-2 pl-4 text-left font-normal">{label}</th>
                    <td colSpan={2} className="pr-3.5 text-right">{value}</td>
                  </tr>
                ))}
                <tr className={`${row} bg-[#ebebeb] text-left`}>
                  <th className="border-r-2 pl-4">取引時間</th>
                  <th className="border-r-2 pl-2.5">呼値</th>
                  <th className="pl-2.5">取引</th>
                </tr>
                {SESSIONS.map(([day, hours], i) => (
                  <tr key={day} className={`${row} ${stripe(i + 1)}`}>
                    <th scope="row" className="border-r-2 pl-4 text-left font-normal">{day}</th>
                    <td className="border-r-2 pl-2.5">{hours}</td>
                    <td className="pl-2.5">{hours}</td>
                  </tr>
                ))}
              </tbody>
            </table>
          </div>
          <div className={`flex w-[34px] flex-col border-t-2 border-r-2 border-[#404040] ${HATCH}`}>
            <ScrollButton up />
            <span className={`${RAISED} flex-1`} />
            <span className="h-9" />
            <ScrollButton />
          </div>
        </div>
        <span className="absolute -top-[3px] -left-0.5 h-2 w-[70px] bg-[#eb0000]" />
        <span className="pointer-events-none absolute -top-0.5 right-6 bottom-0 left-1.5 border-8 border-[#eb0000]" />
      </div>
      <div className="flex justify-center pt-5 pb-4">
        <button
          onClick={onClose}
          className="h-[46px] w-[180px] border-2 border-black pt-0.5 text-[21px] shadow-[inset_2px_2px_0_#fff,inset_-2px_-2px_0_#404040,inset_-4px_-4px_0_#808080]"
        >
          閉じる(<u className="underline-offset-4">C</u>)
        </button>
      </div>
    </div>
  );
}
